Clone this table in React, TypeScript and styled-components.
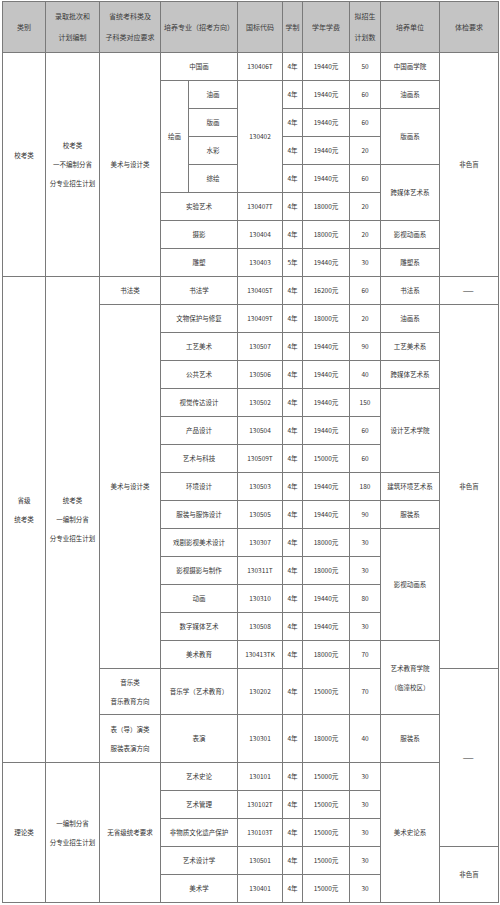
import React from 'react';
import styled, { createGlobalStyle } from 'styled-components';

const Global = createGlobalStyle`
  html, body { margin: 0; padding: 0; background: #fff; }
  body { font-family: "Noto Sans CJK SC", "Noto Sans", sans-serif; }
`;

const Sheet = styled.div`
  display: grid;
  grid-template-columns: 42px 53px 60px 27px 48px 44px 19px 46px 30px 58px 58px;
  grid-template-rows: 50px repeat(22, 27px) 45px 47px repeat(5, 27px);
  gap: 1px;
  padding: 1px;
  width: max-content;
  margin: 1px 0 0 2px;
  background: #7a7a7a;
`;

const Cell = styled.div<{ $c: number; $r: number; $cs?: number; $rs?: number; $head?: boolean }>`
  grid-column: ${(p) => p.$c} / span ${(p) => p.$cs ?? 1};
  grid-row: ${(p) => p.$r} / span ${(p) => p.$rs ?? 1};
  background: ${(p) => (p.$head ? '#c4c4c4' : '#ffffff')};
  color: ${(p) => (p.$head ? '#3a3a3a' : '#333333')};
  font-size: ${(p) => (p.$head ? '7px' : '6.5px')};
  display: flex;
  flex-direction: column;
  align-items: center;
  justify-content: center;
  text-align: center;
  white-space: nowrap;
  overflow: hidden;
`;

const Line = styled.span<{ $head?: boolean; $dash?: boolean }>`
  display: block;
  line-height: ${(p) => (p.$head ? '21px' : '19px')};
  min-height: ${(p) => (p.$head ? '21px' : '19px')};
  letter-spacing: ${(p) => (p.$dash ? '1.5px' : '0')};
`;

type Span = { c: number; r: number; cs?: number; rs?: number; lines: string[]; head?: boolean };

const header: Span[] = [
  { c: 1, r: 1, lines: ['类别'] },
  { c: 2, r: 1, lines: ['录取批次和', '计划编制'] },
  { c: 3, r: 1, lines: ['省统考科类及', '子科类对应要求'] },
  { c: 4, r: 1, cs: 2, lines: ['培养专业（招考方向）'] },
  { c: 6, r: 1, lines: ['国标代码'] },
  { c: 7, r: 1, lines: ['学制'] },
  { c: 8, r: 1, lines: ['学年学费'] },
  { c: 9, r: 1, lines: ['拟招生', '计划数'] },
  { c: 10, r: 1, lines: ['培养单位'] },
  { c: 11, r: 1, lines: ['体检要求'] },
].map((h) => ({ ...h, head: true }));

type Major = { name: string; code: string; yrs: string; fee: string; plan: string };

const majors: Major[] = [
  { name: '中国画', code: '130406T', yrs: '4年', fee: '19440元', plan: '50' },
  { name: '油画', code: '130402', yrs: '4年', fee: '19440元', plan: '60' },
  { name: '版画', code: '', yrs: '4年', fee: '19440元', plan: '60' },
  { name: '水彩', code: '', yrs: '4年', fee: '19440元', plan: '20' },
  { name: '综绘', code: '', yrs: '4年', fee: '19440元', plan: '60' },
  { name: '实验艺术', code: '130407T', yrs: '4年', fee: '18000元', plan: '20' },
  { name: '摄影', code: '130404', yrs: '4年', fee: '18000元', plan: '20' },
  { name: '雕塑', code: '130403', yrs: '5年', fee: '19440元', plan: '30' },
  { name: '书法学', code: '130405T', yrs: '4年', fee: '16200元', plan: '60' },
  { name: '文物保护与修复', code: '130409T', yrs: '4年', fee: '18000元', plan: '20' },
  { name: '工艺美术', code: '130507', yrs: '4年', fee: '19440元', plan: '90' },
  { name: '公共艺术', code: '130506', yrs: '4年', fee: '19440元', plan: '40' },
  { name: '视觉传达设计', code: '130502', yrs: '4年', fee: '19440元', plan: '150' },
  { name: '产品设计', code: '130504', yrs: '4年', fee: '19440元', plan: '60' },
  { name: '艺术与科技', code: '130509T', yrs: '4年', fee: '15000元', plan: '60' },
  { name: '环境设计', code: '130503', yrs: '4年', fee: '19440元', plan: '180' },
  { name: '服装与服饰设计', code: '130505', yrs: '4年', fee: '19440元', plan: '90' },
  { name: '戏剧影视美术设计', code: '130307', yrs: '4年', fee: '18000元', plan: '30' },
  { name: '影视摄影与制作', code: '130311T', yrs: '4年', fee: '18000元', plan: '30' },
  { name: '动画', code: '130310', yrs: '4年', fee: '19440元', plan: '80' },
  { name: '数字媒体艺术', code: '130508', yrs: '4年', fee: '19440元', plan: '30' },
  { name: '美术教育', code: '130413TK', yrs: '4年', fee: '18000元', plan: '70' },
  { name: '音乐学（艺术教育）', code: '130202', yrs: '4年', fee: '15000元', plan: '70' },
  { name: '表演', code: '130301', yrs: '4年', fee: '18000元', plan: '40' },
  { name: '艺术史论', code: '130101', yrs: '4年', fee: '15000元', plan: '30' },
  { name: '艺术管理', code: '130102T', yrs: '4年', fee: '15000元', plan: '30' },
  { name: '非物质文化遗产保护', code: '130103T', yrs: '4年', fee: '15000元', plan: '30' },
  { name: '艺术设计学', code: '130501', yrs: '4年', fee: '15000元', plan: '30' },
  { name: '美术学', code: '130401', yrs: '4年', fee: '15000元', plan: '30' },
];

// data row index i -> grid row i + 2
const R = (i: number) => i + 2;

const groups: Span[] = [
  { c: 1, r: R(0), rs: 8, lines: ['校考类', ''] },
  { c: 1, r: R(8), rs: 16, lines: ['省级', '统考类', ''] },
  { c: 1, r: R(24), rs: 5, lines: ['理论类'] },
  { c: 2, r: R(0), rs: 8, lines: ['校考类', '一不编制分省', '分专业招生计划'] },
  { c: 2, r: R(8), rs: 16, lines: ['统考类', '一编制分省', '分专业招生计划'] },
  { c: 2, r: R(24), rs: 5, lines: ['一编制分省', '分专业招生计划'] },
  { c: 3, r: R(0), rs: 8, lines: ['美术与设计类'] },
  { c: 3, r: R(8), lines: ['书法类'] },
  { c: 3, r: R(9), rs: 13, lines: ['美术与设计类'] },
  { c: 3, r: R(22), lines: ['音乐类', '音乐教育方向'] },
  { c: 3, r: R(23), lines: ['表（导）演类', '服装表演方向'] },
  { c: 3, r: R(24), rs: 5, lines: ['无省级统考要求'] },
  { c: 4, r: R(1), rs: 4, lines: ['绘画'] },
  { c: 10, r: R(0), lines: ['中国画学院'] },
  { c: 10, r: R(1), lines: ['油画系'] },
  { c: 10, r: R(2), rs: 2, lines: ['版画系'] },
  { c: 10, r: R(4), rs: 2, lines: ['跨媒体艺术系'] },
  { c: 10, r: R(6), lines: ['影视动画系'] },
  { c: 10, r: R(7), lines: ['雕塑系'] },
  { c: 10, r: R(8), lines: ['书法系'] },
  { c: 10, r: R(9), lines: ['油画系'] },
  { c: 10, r: R(10), lines: ['工艺美术系'] },
  { c: 10, r: R(11), lines: ['跨媒体艺术系'] },
  { c: 10, r: R(12), rs: 3, lines: ['设计艺术学院'] },
  { c: 10, r: R(15), lines: ['建筑环境艺术系'] },
  { c: 10, r: R(16), lines: ['服装系'] },
  { c: 10, r: R(17), rs: 4, lines: ['影视动画系'] },
  { c: 10, r: R(21), rs: 2, lines: ['艺术教育学院', '（临潼校区）'] },
  { c: 10, r: R(23), lines: ['服装系'] },
  { c: 10, r: R(24), rs: 5, lines: ['美术史论系'] },
  { c: 11, r: R(0), rs: 8, lines: ['非色盲'] },
  { c: 11, r: R(8), lines: ['——'] },
  { c: 11, r: R(9), rs: 13, lines: ['非色盲'] },
  { c: 11, r: R(22), rs: 5, lines: ['——'] },
  { c: 11, r: R(27), rs: 2, lines: ['非色盲'] },
];

const majorCells: Span[] = majors.flatMap((m, i) => {
  const sub = i >= 1 && i <= 4;
  const out: Span[] = [];
  out.push(sub ? { c: 5, r: R(i), lines: [m.name] } : { c: 4, r: R(i), cs: 2, lines: [m.name] });
  if (!sub) out.push({ c: 6, r: R(i), lines: [m.code] });
  else if (i === 1) out.push({ c: 6, r: R(i), rs: 4, lines: [m.code] });
  out.push({ c: 7, r: R(i), lines: [m.yrs] });
  out.push({ c: 8, r: R(i), lines: [m.fee] });
  out.push({ c: 9, r: R(i), lines: [m.plan] });
  return out;
});

const all: Span[] = [...header, ...groups, ...majorCells];

export default function App() {
  return (
    <>
      <Global />
      <Sheet>
        {all.map((s, k) => (
          <Cell key={k} $c={s.c} $r={s.r} $cs={s.cs} $rs={s.rs} $head={s.head}>
            {s.lines.map((l, j) => (
              <Line key={j} $head={s.head} $dash={l === '——'}>
                {l || '\u00a0'}
              </Line>
            ))}
          </Cell>
        ))}
      </Sheet>
    </>
  );
}
